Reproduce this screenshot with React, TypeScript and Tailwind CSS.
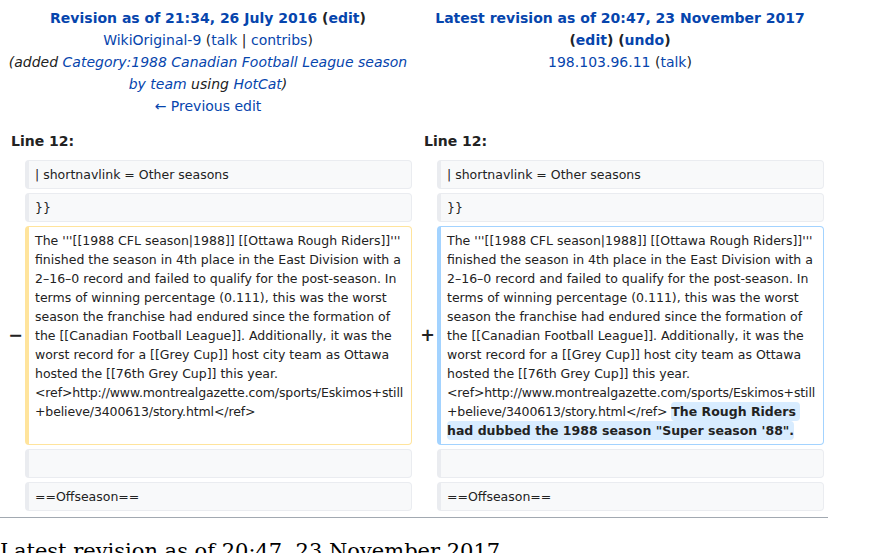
const link = 'text-[#0645ad]'

function Marker({ sign }: { sign: string }) {
  return (
    <div className="-mr-[2px] self-center text-right font-bold text-[17.5px] leading-[1.2] text-[#222]">
      {sign}
    </div>
  )
}

function Context({ children }: { children?: React.ReactNode }) {
  return (
    <div className="whitespace-pre-wrap break-words rounded-[4px] border border-l-4 border-[#eaecf0] bg-[#f8f9fa] py-[4px] pl-[6px] pr-[2px] text-[12.5px] leading-[19px] text-[#222]">
      {children ?? '\u00a0'}
    </div>
  )
}

const paragraph =
  "The '''[[1988 CFL season|1988]] [[Ottawa Rough Riders]]''' finished the season in 4th place in the East Division with a 2–16–0 record and failed to qualify for the post-season. In terms of winning percentage (0.111), this was the worst season the franchise had endured since the formation of the [[Canadian Football League]]. Additionally, it was the worst record for a [[Grey Cup]] host city team as Ottawa hosted the [[76th Grey Cup]] this year. "

function Ref() {
  return (
    <span className="tracking-[-0.12px]">
      {'<ref>http://www.montrealgazette.com/sports/Eskimos+still+believe/3400613/story.html</ref>'}
    </span>
  )
}

export default function App() {
  return (
    <div className="w-[874px] bg-white font-['DejaVu_Sans',sans-serif] text-[#222]">
      <div className="grid w-[828px] grid-cols-[17px_minmax(0,1fr)_17px_minmax(0,1fr)] gap-[4px] px-[4px]">
        {/* Revision titles */}
        <div className="col-span-2 pt-[7px] text-center text-[14px] leading-[22px]">
          <div className="font-bold">
            <span className={link}>Revision as of 21:34, 26 July 2016</span> (
            <span className={link}>edit</span>)
          </div>
          <div>
            <span className={link}>WikiOriginal-9</span> (<span className={link}>talk</span> |{' '}
            <span className={link}>contribs</span>)
          </div>
          <div className="italic">
            (added{' '}
            <span className={link}>Category:1988 Canadian Football League season by team</span>{' '}
            using <span className={link}>HotCat</span>)
          </div>
          <div className={link}>← Previous edit</div>
        </div>
        <div className="col-span-2 pt-[7px] text-center text-[14px] leading-[22px]">
          <div className={`font-bold ${link}`}>Latest revision as of 20:47, 23 November 2017</div>
          <div className="font-bold">
            (<span className={link}>edit</span>) (<span className={link}>undo</span>)
          </div>
          <div>
            <span className={link}>198.103.96.11</span> (<span className={link}>talk</span>)
          </div>
        </div>

        {/* Line numbers */}
        <div className="col-span-2 pb-[4px] pl-[7px] pt-[9px] text-[14px] font-bold leading-[22px]">
          Line 12:
        </div>
        <div className="col-span-2 pb-[4px] pl-[8px] pt-[9px] text-[14px] font-bold leading-[22px]">
          Line 12:
        </div>

        <div />
        <Context>| shortnavlink = Other seasons</Context>
        <div />
        <Context>| shortnavlink = Other seasons</Context>

        <div />
        <Context>{'}}'}</Context>
        <div />
        <Context>{'}}'}</Context>

        <Marker sign="−" />
        <div className="whitespace-pre-wrap break-words rounded-[4px] border border-l-4 border-[#ffe49c] bg-white py-[4px] pl-[6px] pr-[2px] text-[12.5px] leading-[19px]">
          {paragraph}
          <Ref />
        </div>
        <Marker sign="+" />
        <div className="whitespace-pre-wrap break-words rounded-[4px] border border-l-4 border-[#a3d3ff] bg-white py-[4px] pl-[6px] pr-[2px] text-[12.5px] leading-[19px]">
          {paragraph}
          <Ref />{' '}
          <ins className="rounded-[4px] bg-[#d8ecff] py-[2px] font-bold no-underline [box-decoration-break:clone]">
            The Rough Riders had dubbed the 1988 season "Super season '88".
          </ins>
        </div>

        <div />
        <Context />
        <div />
        <Context />

        <div />
        <Context>==Offseason==</Context>
        <div />
        <Context>==Offseason==</Context>
      </div>

      <hr className="mt-[6px] w-[828px] border-0 border-t border-[#a2a9b1]" />

      <h2 className="mt-[20px] font-['DejaVu_Serif',serif] text-[21px] leading-[1.3] text-black">
        Latest revision as of 20:47, 23 November 2017
      </h2>
    </div>
  )
}
